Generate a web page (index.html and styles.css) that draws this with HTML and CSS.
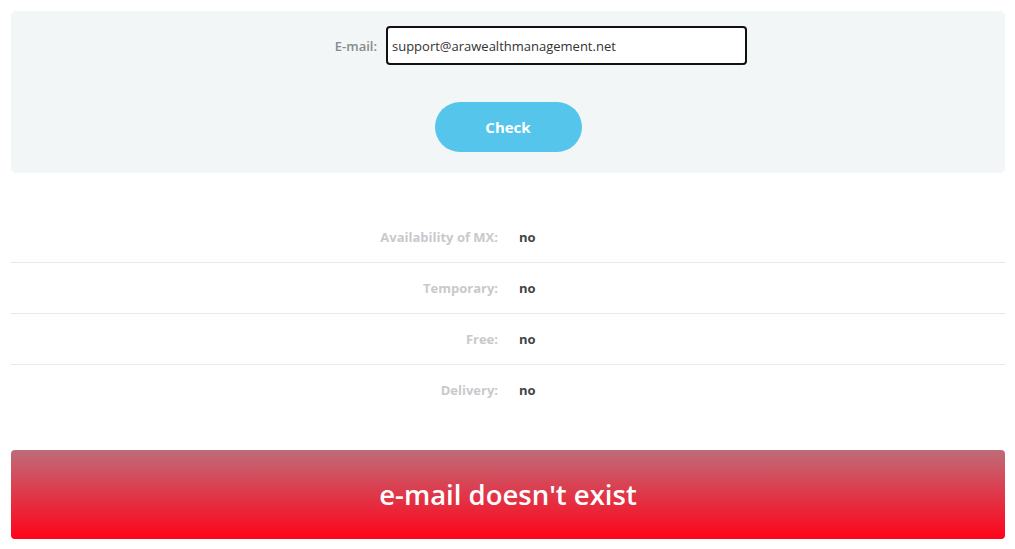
FILE: index.html
```html
<!DOCTYPE html>
<html lang="en">

<head>
    <meta charset="UTF-8">
    <meta name="viewport" content="width=device-width, initial-scale=1.0">
    <title>E-mail Checker</title>
    <link rel="stylesheet" href="styles.css">
</head>

<body>
    <div class="check-panel">
        <form class="check-form" id="checkForm">
            <label for="email">E-mail:</label>
            <input type="text" id="email" name="email" value="support@arawealthmanagement.net">
            <span></span>
        </form>
        <button type="submit" form="checkForm">Check</button>
    </div>

    <div class="results">
        <div class="result-row">
            <span class="result-label">Availability of MX:</span>
            <span class="result-value">no</span>
        </div>
        <div class="result-row">
            <span class="result-label">Temporary:</span>
            <span class="result-value">no</span>
        </div>
        <div class="result-row">
            <span class="result-label">Free:</span>
            <span class="result-value">no</span>
        </div>
        <div class="result-row">
            <span class="result-label">Delivery:</span>
            <span class="result-value">no</span>
        </div>
    </div>

    <div class="verdict">e-mail doesn't exist</div>
</body>

</html>
```

FILE: styles.css
```css
body {
    font-family: "Open Sans", Arial, sans-serif;
    margin: 0;
    padding: 11px 10px 10px 11px;
    background-color: #fff;
}

.check-panel {
    background-color: #f3f6f7;
    border-radius: 5px;
    padding: 15px 0 21px;
    display: flex;
    flex-direction: column;
    align-items: center;
}

.check-form {
    width: 100%;
    display: grid;
    grid-template-columns: 1fr 361px 249px;
    column-gap: 9px;
    align-items: center;
}

.check-form label {
    text-align: right;
    font-size: 13px;
    font-weight: 600;
    color: #8a8a8a;
}

.check-form input {
    box-sizing: border-box;
    height: 39px;
    padding: 0 4px;
    font-family: inherit;
    font-size: 13px;
    color: #333;
    border: 2px solid #111;
    border-radius: 4px;
    background-color: #fff;
}

button {
    margin-top: 37px;
    width: 147px;
    height: 50px;
    font-family: inherit;
    font-size: 15px;
    font-weight: 700;
    color: #fff;
    background-color: #55c5ec;
    border: none;
    border-radius: 25px;
    cursor: pointer;
}

.results {
    margin-top: 39px;
}

.result-row {
    display: grid;
    grid-template-columns: 487px 1fr;
    column-gap: 21px;
    align-items: center;
    height: 50px;
    border-bottom: 1px solid #e9e9e9;
}

.result-row:last-child {
    border-bottom: none;
}

.result-label {
    text-align: right;
    font-size: 13px;
    font-weight: 700;
    color: #c8c9cc;
}

.result-value {
    font-size: 13px;
    font-weight: 700;
    color: #444;
}

.verdict {
    margin-top: 35px;
    height: 89px;
    display: flex;
    justify-content: center;
    align-items: center;
    border-radius: 4px;
    background: linear-gradient(to bottom, #bf6c79, #ff0319);
    color: #fff;
    font-size: 27.5px;
    font-weight: 600;
}
```
